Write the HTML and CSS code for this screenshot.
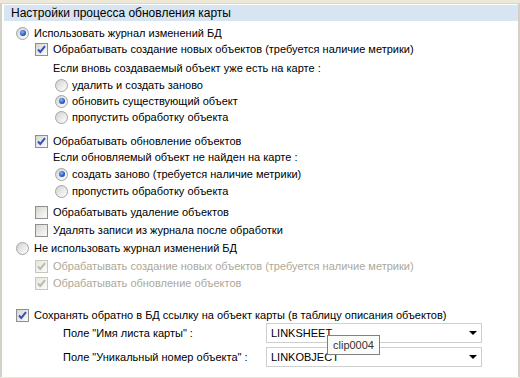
FILE: index.html
```html
<!DOCTYPE html>
<html lang="ru">
<head>
    <meta charset="UTF-8">
    <title>Настройки процесса обновления карты</title>
    <link rel="stylesheet" href="styles.css">
</head>
<body>
    <div class="panel">
        <div class="title">Настройки процесса обновления карты</div>

        <div class="row lvl0 mt4"><span class="radio on"></span>Использовать журнал изменений БД</div>
        <div class="row lvl1"><span class="check on"><svg viewBox="0 0 11 11"><path d="M2 5.5 L4.3 8 L9 2.2" /></svg></span>Обрабатывать создание новых объектов (требуется наличие метрики)</div>
        <div class="row note mt3">Если вновь создаваемый объект уже есть на карте :</div>
        <div class="row lvl2 mt1"><span class="radio"></span>удалить и создать заново</div>
        <div class="row lvl2"><span class="radio on"></span>обновить существующий объект</div>
        <div class="row lvl2"><span class="radio"></span>пропустить обработку объекта</div>

        <div class="row lvl1 mt8"><span class="check on"><svg viewBox="0 0 11 11"><path d="M2 5.5 L4.3 8 L9 2.2" /></svg></span>Обрабатывать обновление объектов</div>
        <div class="row note">Если обновляемый объект не найден на карте :</div>
        <div class="row lvl2 mt1"><span class="radio on"></span>создать заново (требуется наличие метрики)</div>
        <div class="row lvl2 mt1"><span class="radio"></span>пропустить обработку объекта</div>

        <div class="row lvl1 mt5"><span class="check"></span>Обрабатывать удаление объектов</div>
        <div class="row lvl1 mt2"><span class="check"></span>Удалять записи из журнала после обработки</div>

        <div class="row lvl0 mt2"><span class="radio"></span>Не использовать журнал изменений БД</div>
        <div class="row lvl1 mt2 disabled"><span class="check on"><svg viewBox="0 0 11 11"><path d="M2 5.5 L4.3 8 L9 2.2" /></svg></span>Обрабатывать создание новых объектов (требуется наличие метрики)</div>
        <div class="row lvl1 mt1 disabled"><span class="check on"><svg viewBox="0 0 11 11"><path d="M2 5.5 L4.3 8 L9 2.2" /></svg></span>Обрабатывать обновление объектов</div>

        <div class="row lvl0 mt16"><span class="check on"><svg viewBox="0 0 11 11"><path d="M2 5.5 L4.3 8 L9 2.2" /></svg></span>Сохранять обратно в БД ссылку на объект карты (в таблицу описания объектов)</div>

        <div class="field">
            <span class="label">Поле "Имя листа карты" :</span>
            <div class="combo"><span>LINKSHEET</span><span class="arrow"></span></div>
        </div>
        <div class="field mt4">
            <span class="label">Поле "Уникальный номер объекта" :</span>
            <div class="combo"><span>LINKOBJECT</span><span class="arrow"></span></div>
        </div>

        <div class="tooltip">clip0004</div>
    </div>
</body>
</html>
```

FILE: styles.css
```css
body {
    margin: 0;
    background-color: #ece9d8;
    font-family: "Liberation Sans", Arial, sans-serif;
    font-size: 11px;
    color: #000;
}
.panel {
    position: relative;
    margin: 3px 0 0 0;
    height: 374px;
    background: white;
    border-top: 1px solid #d8d5c8;
    border-left: 2px solid #d4d0c8;
    border-right: 2px solid #d4d0c8;
    box-sizing: border-box;
    width: 520px;
}
.title {
    margin: 1px 0 0 2px;
    height: 16px;
    line-height: 16px;
    padding-left: 7px;
    font-size: 12px;
    background-color: #d7e4f1;
}
.row {
    display: flex;
    align-items: center;
    height: 16px;
    white-space: nowrap;
}
.lvl0 {
    padding-left: 14px;
    gap: 5px;
}
.lvl1 {
    padding-left: 33px;
    gap: 5px;
}
.lvl2 {
    padding-left: 53px;
    gap: 4px;
}
.note {
    padding-left: 51px;
}
.mt1 { margin-top: 1px; }
.mt2 { margin-top: 2px; }
.mt3 { margin-top: 3px; }
.mt4 { margin-top: 4px; }
.mt5 { margin-top: 5px; }
.mt8 { margin-top: 8px; }
.mt16 { margin-top: 16px; }

.check {
    width: 11px;
    height: 11px;
    flex: none;
    border: 1px solid #8f8f8f;
    background: linear-gradient(135deg, #d6d6d0, #fbfbfa);
    display: flex;
}
.check svg {
    width: 11px;
    height: 11px;
}
.check path {
    fill: none;
    stroke: #3a4fb8;
    stroke-width: 2;
}
.radio {
    width: 11px;
    height: 11px;
    flex: none;
    border: 1px solid #a3a3a3;
    border-radius: 50%;
    background: linear-gradient(135deg, #d2d2d2, #ffffff);
    display: flex;
    align-items: center;
    justify-content: center;
}
.radio.on::after {
    content: "";
    width: 6px;
    height: 6px;
    border-radius: 50%;
    background: radial-gradient(circle at 40% 35%, #8fb6f0, #2457c5 60%, #173a8a);
}
.disabled {
    color: #aca899;
}
.disabled .check {
    border-color: #c9c7ba;
    background: linear-gradient(135deg, #e6e6e0, #fbfbfa);
}
.disabled .check path {
    stroke: #b9b9b0;
}

.field {
    display: flex;
    align-items: center;
    height: 20px;
    padding-left: 61px;
}
.label {
    width: 203px;
    white-space: nowrap;
}
.combo {
    width: 216px;
    height: 20px;
    box-sizing: border-box;
    border: 1px solid #cfcfcf;
    display: flex;
    align-items: center;
    justify-content: space-between;
    padding: 0 4px 0 4px;
}
.arrow {
    width: 0;
    height: 0;
    border-left: 4px solid transparent;
    border-right: 4px solid transparent;
    border-top: 4px solid #000;
}
.tooltip {
    position: absolute;
    left: 325px;
    top: 331px;
    height: 18px;
    line-height: 18px;
    padding: 0 5px;
    background: #fbfbf8;
    border: 1px solid #808080;
    color: #333;
}
```
